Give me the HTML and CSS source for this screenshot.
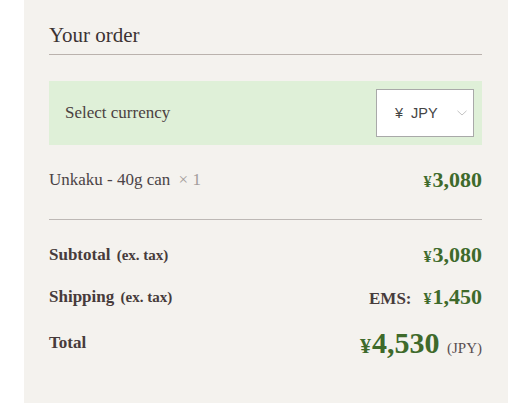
FILE: index.html
```html
<!DOCTYPE html>
<html lang="en">
<head>
<meta charset="utf-8">
<title>Your order</title>
<link rel="stylesheet" href="styles.css">
</head>
<body>
<section class="order">
  <h2 class="order-title">Your order</h2>
  <div class="currency">
    <span class="currency-label">Select currency</span>
    <div class="select">
      <span class="select-value">¥&nbsp;&nbsp;JPY</span>
      <svg class="chevron" width="10" height="6" viewBox="0 0 10 6"><path d="M0.5 0.8 L5 5 L9.5 0.8" fill="none" stroke="#c4c4c4" stroke-width="1"/></svg>
    </div>
  </div>
  <div class="row item">
    <span class="item-name">Unkaku - 40g can <span class="qty">× 1</span></span>
    <span class="price"><span class="yen">¥</span>3,080</span>
  </div>
  <div class="totals">
    <div class="row">
      <span class="label">Subtotal <small>(ex. tax)</small></span>
      <span class="price"><span class="yen">¥</span>3,080</span>
    </div>
    <div class="row">
      <span class="label">Shipping <small>(ex. tax)</small></span>
      <span class="price"><span class="method">EMS:</span><span class="yen">¥</span>1,450</span>
    </div>
    <div class="row total">
      <span class="label">Total</span>
      <span class="price big"><span class="yen">¥</span>4,530 <span class="cur">(JPY)</span></span>
    </div>
  </div>
</section>
</body>
</html>
```
FILE: styles.css
```css
html, body {
  margin: 0;
  padding: 0;
  background: #ffffff;
}
body {
  font-family: "Liberation Serif", "Times New Roman", serif;
  color: #4b4141;
}
.order {
  margin-left: 24px;
  width: 484px;
  min-height: 403px;
  box-sizing: border-box;
  background: #f4f2ee;
  padding: 20px 26px 0 25px;
}
.order-title {
  margin: 0;
  font-weight: normal;
  font-size: 21px;
  line-height: 30px;
  color: #3c3333;
  padding-bottom: 4px;
  border-bottom: 1px solid #bab2ad;
}
.currency {
  margin-top: 26px;
  background: #dff0d8;
  display: flex;
  align-items: center;
  justify-content: space-between;
  padding: 8px 8px 8px 16px;
}
.currency-label {
  font-size: 17px;
  color: #4b4141;
}
.select {
  width: 98px;
  height: 48px;
  box-sizing: border-box;
  background: #fff;
  border: 1px solid #a9a9a9;
  display: flex;
  align-items: center;
  justify-content: space-between;
  padding: 0 6px 0 18px;
}
.select-value {
  font-family: "Liberation Sans", Arial, sans-serif;
  font-size: 14.5px;
  color: #444;
}
.chevron {
  display: block;
}
.row {
  display: flex;
  align-items: center;
  justify-content: space-between;
  height: 30px;
}
.item {
  margin-top: 20px;
  padding-bottom: 24px;
  border-bottom: 1px solid #bdb8b5;
  box-sizing: content-box;
}
.item-name {
  font-size: 17px;
  color: #4b4346;
}
.qty {
  color: #a39d9b;
  margin-left: 4px;
}
.price {
  font-weight: bold;
  font-size: 22px;
  color: #3e6a2b;
}
.yen {
  font-size: 16px;
  margin-right: 1px;
}
.totals {
  margin-top: 20px;
  display: flex;
  flex-direction: column;
  gap: 12px;
}
.label {
  font-weight: bold;
  font-size: 17px;
  color: #473b3b;
}
.label small {
  font-size: 15px;
  margin-left: 2px;
}
.method {
  font-size: 17px;
  color: #473b3b;
  margin-right: 12px;
}
.total {
  height: 38px;
}
.big {
  font-size: 30px;
}
.big .yen {
  font-size: 22px;
  margin-right: 1px;
}
.cur {
  font-weight: normal;
  font-size: 15px;
  color: #5a4f51;
}
```
